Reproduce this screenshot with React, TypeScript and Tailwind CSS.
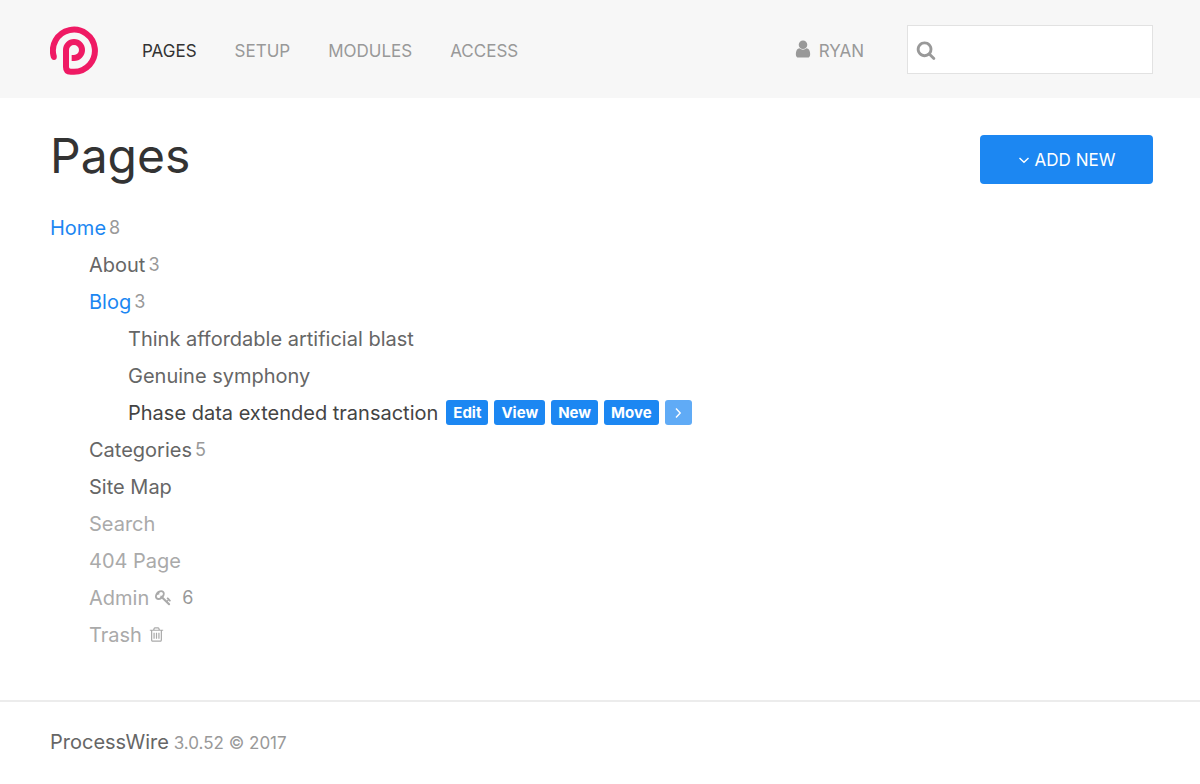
import { useState } from "react";

type TreePage = {
  title: string;
  level: number;
  count?: number;
  state?: "open" | "active" | "hidden";
  icon?: "key" | "trash";
};

const navItems = ["Pages", "Setup", "Modules", "Access"];

const treePages: TreePage[] = [
  { title: "Home", level: 0, count: 8, state: "open" },
  { title: "About", level: 1, count: 3 },
  { title: "Blog", level: 1, count: 3, state: "open" },
  { title: "Think affordable artificial blast", level: 2 },
  { title: "Genuine symphony", level: 2 },
  { title: "Phase data extended transaction", level: 2, state: "active" },
  { title: "Categories", level: 1, count: 5 },
  { title: "Site Map", level: 1 },
  { title: "Search", level: 1, state: "hidden" },
  { title: "404 Page", level: 1, state: "hidden" },
  { title: "Admin", level: 1, count: 6, state: "hidden", icon: "key" },
  { title: "Trash", level: 1, state: "hidden", icon: "trash" },
];

const pageActions = ["Edit", "View", "New", "Move"];

const levelClass = ["", "pl-[39px]", "pl-[78px]"];

const stateClass = {
  open: "text-[#1c87f2]",
  active: "text-[#444444]",
  hidden: "text-[#aaaaaa]",
};

const iconPaths = {
  user: "M1536 1399q0 109-62.5 187t-150.5 78h-854q-88 0-150.5-78t-62.5-187q0-85 8.5-160.5t31.5-152 58.5-131 94-89 134.5-34.5q131 128 313 128t313-128q76 0 134.5 34.5t94 89 58.5 131 31.5 152 8.5 160.5zm-256-887q0 159-112.5 271.5t-271.5 112.5-271.5-112.5-112.5-271.5 112.5-271.5 271.5-112.5 271.5 112.5 112.5 271.5z",
  search:
    "M1216 832q0-185-131.5-316.5t-316.5-131.5-316.5 131.5-131.5 316.5 131.5 316.5 316.5 131.5 316.5-131.5 131.5-316.5zm512 832q0 52-38 90t-90 38q-54 0-90-38l-343-342q-179 124-399 124-143 0-273.5-55.5t-225-150-150-225-55.5-273.5 55.5-273.5 150-225 225-150 273.5-55.5 273.5 55.5 225 150 150 225 55.5 273.5q0 220-124 399l343 343q37 37 37 90z",
  key: "M832 512q0-80-56-136t-136-56-136 56-56 136q0 42 19 83-41-19-83-19-80 0-136 56t-56 136 56 136 136 56 136-56 56-136q0-42-19-83 41 19 83 19 80 0 136-56t56-136zm851 704q0 17-49 66t-66 49q-9 0-28.5-16t-36.5-33-38.5-40-24.5-26l-96 96 220 220q28 28 28 68 0 42-39 81t-81 39q-40 0-68-28l-671-671q-176 131-365 131-163 0-265.5-102.5t-102.5-265.5q0-160 95-313t248-248 313-95q163 0 265.5 102.5t102.5 265.5q0 189-131 365l355 355 96-96q-3-3-26-24.5t-40-38.5-33-36.5-16-28.5q0-17 49-66t66-49q13 0 23 10 6 6 46 44.5t82 79.5 86.5 86 73 78 28.5 41z",
  trash:
    "M704 736v576q0 14-9 23t-23 9h-64q-14 0-23-9t-9-23v-576q0-14 9-23t23-9h64q14 0 23 9t9 23zm256 0v576q0 14-9 23t-23 9h-64q-14 0-23-9t-9-23v-576q0-14 9-23t23-9h64q14 0 23 9t9 23zm256 0v576q0 14-9 23t-23 9h-64q-14 0-23-9t-9-23v-576q0-14 9-23t23-9h64q14 0 23 9t9 23zm128 724v-948h-896v948q0 22 7 40.5t14.5 27 10.5 8.5h832q3 0 10.5-8.5t14.5-27 7-40.5zm-672-1076h448l-48-117q-7-9-17-11h-317q-10 2-17 11zm928 32v64q0 14-9 23t-23 9h-96v948q0 83-47 143.5t-113 60.5h-832q-66 0-113-58.5t-47-141.5v-952h-96q-14 0-23-9t-9-23v-64q0-14 9-23t23-9h309l70-167q15-37 54-63t79-26h320q40 0 79 26t54 63l70 167h309q14 0 23 9t9 23z",
};

const Icon = ({
  name,
  className,
}: {
  name: keyof typeof iconPaths;
  className: string;
}) => (
  <svg
    viewBox="0 0 1792 1792"
    fill="currentColor"
    className={className}
    aria-hidden="true"
  >
    <path d={iconPaths[name]} />
  </svg>
);

const Angle = ({ d }: { d: string }) => (
  <svg
    viewBox="0 0 12 12"
    fill="none"
    stroke="currentColor"
    strokeWidth="1.4"
    className="size-3"
    aria-hidden="true"
  >
    <path d={d} />
  </svg>
);

const Logo = () => (
  <svg
    viewBox="30 33 144 147"
    fill="none"
    stroke="#ef1a64"
    strokeWidth="18"
    className="h-[49px] w-12"
    aria-hidden="true"
  >
    <path
      d="M42 127A63 63 0 1 1 102 170H92Q78 170 78 156V105A24 24 0 1 1 102 129H95"
      strokeLinejoin="round"
    />
    <circle cx="42" cy="127" r="8" fill="#ef1a64" stroke="none" />
  </svg>
);

const Header = () => {
  const [query, setQuery] = useState("");

  return (
    <header className="flex h-[98px] items-center bg-[#f7f7f7] pt-px pr-[47px] pl-[50px]">
      <a href="#" aria-label="ProcessWire" className="pt-[2px]">
        <Logo />
      </a>
      <nav className="ml-11 flex gap-[38px] pt-[2px] text-[17px] leading-6 uppercase">
        {navItems.map((item, idx) => (
          <a
            key={item}
            href="#"
            className={idx === 0 ? "text-[#333333]" : "text-[#999999]"}
          >
            {item}
          </a>
        ))}
      </nav>
      <a
        href="#"
        className="ml-auto flex items-start gap-[6px] pt-[2px] text-[17px] leading-6 text-[#999999] uppercase"
      >
        <Icon name="user" className="size-5" />
        Ryan
      </a>
      <div className="relative ml-[43px] w-[246px]">
        <Icon
          name="search"
          className="absolute top-[15px] left-[9px] size-5 text-[#999999]"
        />
        <input
          type="search"
          aria-label="Search"
          value={query}
          onChange={(e) => setQuery(e.target.value)}
          className="block h-[49px] w-full border border-[#e2e2e2] bg-white pr-3 pl-10 text-[17px] text-[#666666] outline-none"
        />
      </div>
    </header>
  );
};

const PageActions = () => (
  <div className="ml-2 flex gap-[6px] text-[15px] font-bold text-white">
    {pageActions.map((action) => (
      <button
        key={action}
        type="button"
        className="h-[25px] rounded-[3px] bg-[#1c87f2] px-[7px]"
      >
        {action}
      </button>
    ))}
    <button
      type="button"
      aria-label="More actions"
      className="flex h-[25px] w-[27px] items-center justify-center rounded-[3px] bg-[#60abf6]"
    >
      <Angle d="M4 1.5l4.2 4.5L4 10.5" />
    </button>
  </div>
);

const TreeRow = ({ page }: { page: TreePage }) => (
  <li className={`flex h-[37px] items-center ${levelClass[page.level]}`}>
    <a
      href="#"
      className={`flex items-center gap-[6px] ${
        page.state ? stateClass[page.state] : "text-[#666666]"
      }`}
    >
      {page.title}
      {page.icon && <Icon name={page.icon} className="size-[17px]" />}
    </a>
    {page.count && (
      <span
        className={`text-lg text-[#999999] ${
          page.icon ? "ml-[10px]" : "ml-[3px]"
        }`}
      >
        {page.count}
      </span>
    )}
    {page.state === "active" && <PageActions />}
  </li>
);

const App = () => {
  return (
    <div className="flex min-h-screen flex-col bg-white font-['Inter',sans-serif]">
      <Header />

      <main className="flex-1 pr-[47px] pb-[46px] pl-[50px]">
        <div className="flex items-start justify-between pt-[37px]">
          <h1 className="text-5xl leading-[42px] text-[#333333]">Pages</h1>
          <button
            type="button"
            className="flex h-[49px] w-[173px] items-center justify-center gap-[5px] rounded bg-[#1c87f2] pt-[2px] text-[17px] text-white uppercase"
          >
            <Angle d="M1.5 3L6 7.2 10.5 3" />
            Add New
          </button>
        </div>

        <ul className="mt-[25px] text-xl">
          {treePages.map((page) => (
            <TreeRow key={page.title} page={page} />
          ))}
        </ul>
      </main>

      <footer className="h-[84px] border-t-2 border-[#ececec] pt-[26px] pl-[50px] text-[17px] text-[#999999]">
        <a href="#" className="text-xl text-[#666666]">
          ProcessWire
        </a>{" "}
        3.0.52 © 2017
      </footer>
    </div>
  );
};

export default App;
